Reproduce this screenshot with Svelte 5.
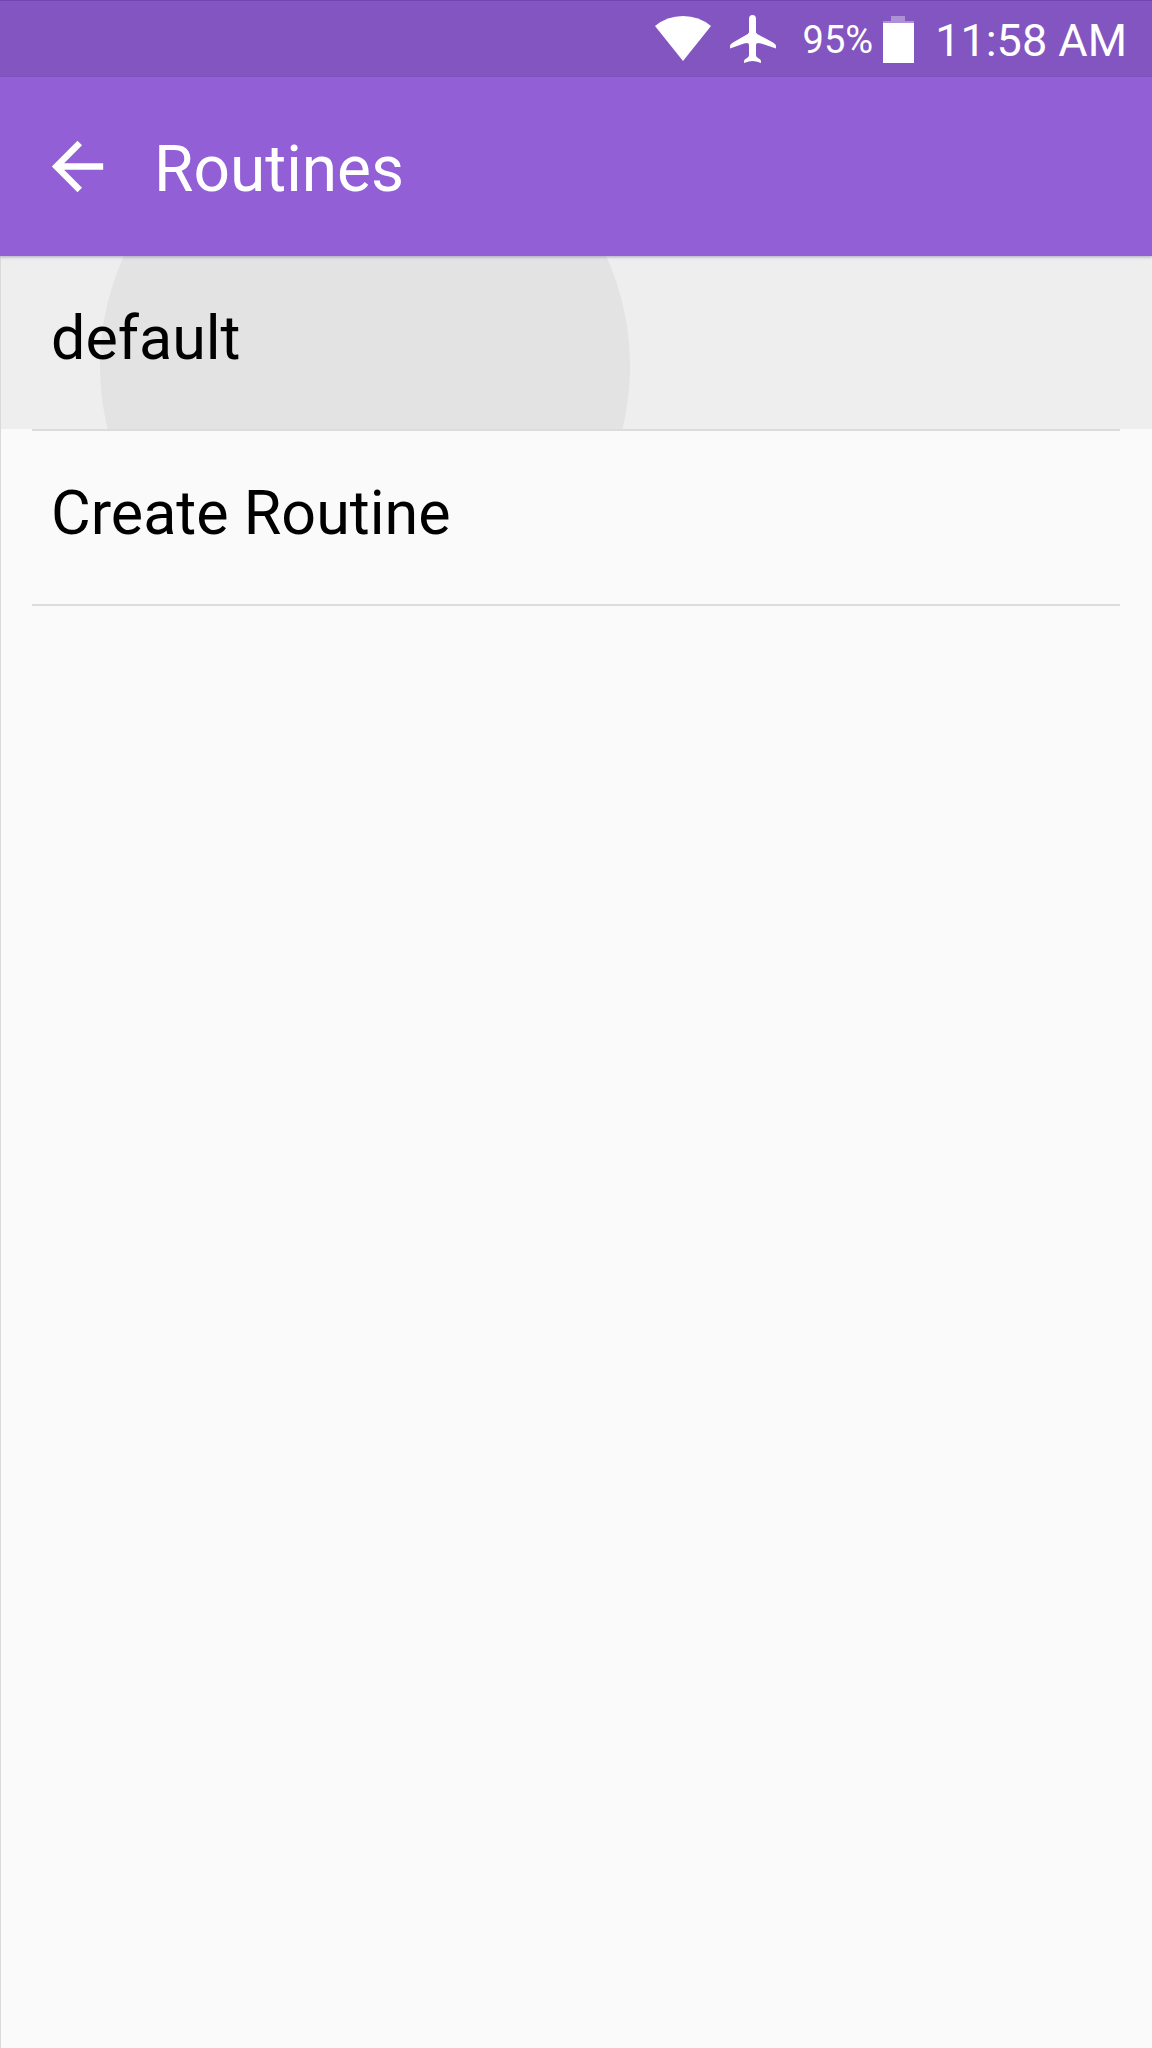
<script>
  let routines = ['default', 'Create Routine'];
  let pressed = 'default';
</script>

<style>
  :global(body) {
    background: #fafafa;
    margin: 0;
  }

  .screen {
    border-left: 1px solid rgba(0, 0, 0, 0.13);
    box-sizing: border-box;
    color: #000;
    font-family: Roboto, sans-serif;
    min-height: 100vh;
  }

  .status {
    align-items: center;
    background: #8355c0;
    border-top: 1px solid #7444b2;
    box-sizing: border-box;
    color: #fff;
    display: flex;
    height: 77px;
    justify-content: flex-end;
    margin-left: -1px;
    padding-right: 25px;
  }

  .status svg {
    display: block;
    fill: #fff;
  }

  .status__plane {
    margin-left: 17px;
  }

  .status__percent {
    font-size: 38px;
    line-height: 46px;
    margin: 0 10px 0 26px;
    padding-top: 2px;
  }

  .status__time {
    font-size: 45px;
    line-height: 56px;
    margin-left: 21px;
    padding-top: 4px;
  }

  .toolbar {
    align-items: center;
    background: #925fd6;
    box-shadow: 0 1px 3px rgba(80, 60, 120, 0.4);
    color: #fff;
    display: flex;
    gap: 38px;
    height: 179px;
    margin-left: -1px;
    padding-left: 39px;
    position: relative;
    z-index: 1;
  }

  .toolbar__back {
    background: none;
    border: 0;
    padding: 0;
  }

  .toolbar__back svg {
    display: block;
    fill: #fff;
  }

  .toolbar h1 {
    font-size: 64px;
    font-weight: 400;
    line-height: 76px;
    margin: 0;
    padding-top: 6px;
  }

  .routines {
    list-style: none;
    margin: 0;
    padding: 0;
  }

  .routines li::after {
    background: #dcdcdc;
    content: '';
    display: block;
    height: 2px;
    margin: 0 32px 0 31px;
  }

  .row {
    background: none;
    border: 0;
    color: inherit;
    display: block;
    font: inherit;
    font-size: 61px;
    line-height: 70px;
    overflow: hidden;
    padding: 47px 50px 56px;
    position: relative;
    text-align: left;
    width: 100%;
  }

  .row.pressed {
    background: #eee;
  }

  .row__label {
    position: relative;
  }

  .row__ripple {
    background: #e3e3e3;
    border-radius: 50%;
    height: 530px;
    left: 99px;
    position: absolute;
    top: -155px;
    width: 530px;
  }
</style>

<div class="screen">
  <div class="status">
    <svg width="58" height="46" viewBox="0 0 58 46" aria-hidden="true">
      <path d="M1 10Q13 0 29 0T57 10L29 45Z" />
    </svg>
    <svg class="status__plane" width="48" height="48" viewBox="0 0 48 48" aria-hidden="true">
      <path d="M20 4Q20 0 23.500 0T27 4V17.500Q28 19 30 20L44 27.500Q47 29 47 31V33.500L32 28.500Q27 27 27 30V40Q27 42 29 43Q32 44.500 32 46V48Q27 46 23.500 46T15 48V46Q15 44.500 18 43Q20 42 20 40V30Q20 27 15 28.500L1 33.500V31Q1 29 4 27.500L17 20Q19 19 20 17.500Z" />
    </svg>
    <span class="status__percent">95%</span>
    <svg width="31" height="47" viewBox="0 0 31 47" aria-hidden="true">
      <path d="M8 0H22V5H31V7H0V5H8Z" opacity="0.35" />
      <path d="M0 7H31V47H0Z" />
    </svg>
    <span class="status__time">11:58 AM</span>
  </div>

  <header class="toolbar">
    <button class="toolbar__back" aria-label="Back">
      <svg width="77" height="77" viewBox="0 0 24 24" aria-hidden="true">
        <path d="M20 11H7.830l5.590-5.590L12 4l-8 8 8 8 1.410-1.410L7.830 13H20z" />
      </svg>
    </button>
    <h1>Routines</h1>
  </header>

  <ul class="routines">
    {#each routines as routine}
      <li>
        <button class="row {routine === pressed ? 'pressed' : ''}">
          {#if routine === pressed}<span class="row__ripple"></span>{/if}
          <span class="row__label">{routine}</span>
        </button>
      </li>
    {/each}
  </ul>
</div>
